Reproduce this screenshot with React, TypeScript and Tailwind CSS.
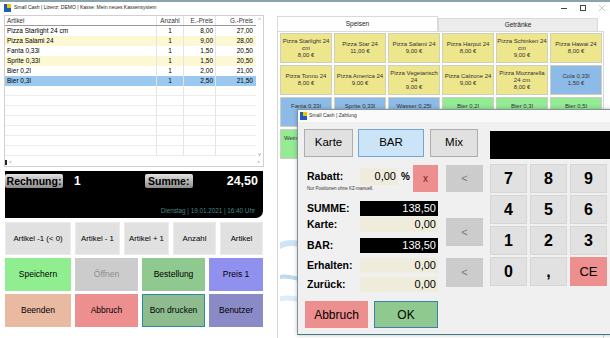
import React from "react"

const rows = [
  { name: "Pizza Starlight 24 cm", qty: "1", ep: "8,00", gp: "27,00", bg: "bg-white" },
  { name: "Pizza Salami 24", qty: "1", ep: "9,00", gp: "28,00", bg: "bg-[#fbf8d3]" },
  { name: "Fanta 0,33l", qty: "1", ep: "1,50", gp: "20,50", bg: "bg-white" },
  { name: "Sprite 0,33l", qty: "1", ep: "1,50", gp: "20,50", bg: "bg-[#fbf8d3]" },
  { name: "Bier 0,2l", qty: "1", ep: "2,00", gp: "21,00", bg: "bg-white" },
  { name: "Bier 0,3l", qty: "1", ep: "2,50", gp: "21,50", bg: "bg-[#9ac8ef]" },
]

const Y = "bg-[#eee68c]"
const B = "bg-[#8dbbe8]"
const G = "bg-[#93eb93]"

const products = [
  { lines: ["Pizza Starlight 24", "cm", "8,00 €"], c: Y },
  { lines: ["Pizza Star 24", "11,00 €"], c: Y },
  { lines: ["Pizza Salami 24", "9,00 €"], c: Y },
  { lines: ["Pizza Harput 24", "8,00 €"], c: Y },
  { lines: ["Pizza Schinken 24", "cm", "9,00 €"], c: Y },
  { lines: ["Pizza Hawai 24", "8,00 €"], c: Y },
  { lines: ["Pizza Tonno 24", "8,00 €"], c: Y },
  { lines: ["Pizza America 24", "9,00 €"], c: Y },
  { lines: ["Pizza Vegetarisch", "24", "9,00 €"], c: Y },
  { lines: ["Pizza Calzone 24", "9,00 €"], c: Y },
  { lines: ["Pizza Mozzarella", "24 cm", "8,00 €"], c: Y },
  { lines: ["Cola 0,33l", "1,50 €"], c: B },
  { lines: ["Fanta 0,33l"], c: B },
  { lines: ["Sprite 0,33l"], c: B },
  { lines: ["Wasser 0,25l"], c: B },
  { lines: ["Bier 0,2l"], c: G },
  { lines: ["Bier 0,3l"], c: G },
  { lines: ["Bier 0,5l"], c: G },
  { lines: ["Weinschorle 0,2l"], c: G },
]

function AppIcon() {
  return (
    <svg width="7" height="8" viewBox="0 0 7 8">
      <rect x="0" y="0" width="7" height="8" fill="#1d5fb8" />
      <rect x="3" y="0" width="4" height="4" fill="#f5c400" />
    </svg>
  )
}

function LabelBox({ children, w }: { children: React.ReactNode; w: string }) {
  return (
    <div
      className={`${w} h-[14px] rounded-[2px] bg-gradient-to-b from-[#e4e4e4] to-[#8c8c8c] flex items-center justify-center text-[10.5px] font-bold text-black`}
    >
      {children}
    </div>
  )
}

function Field({ value, dark }: { value: string; dark?: boolean }) {
  return (
    <div
      className={`w-[78px] h-[15px] flex items-center justify-end pr-[2px] text-[11px] leading-none ${
        dark ? "bg-black text-white" : "bg-[#efecdc] text-black"
      }`}
    >
      {value}
    </div>
  )
}

function FormRow({ label, value, dark, mt }: { label: string; value: string; dark?: boolean; mt: string }) {
  return (
    <div className={`flex items-center h-[15px] ${mt}`}>
      <div className="w-[56px] pl-[3px] text-[10.5px] leading-none font-bold text-black">{label}</div>
      <Field value={value} dark={dark} />
    </div>
  )
}

export default function App() {
  return (
    <div className="w-[610px] h-[338px] relative overflow-hidden bg-white font-['Liberation_Sans',Arial,sans-serif] text-[#222]">
      <div className="h-[2px] bg-[#8aa3ad]" />
      {/* title bar */}
      <div className="h-[12px] flex items-center pl-[4px] pr-[5px]">
        <AppIcon />
        <span className="ml-[3px] text-[5px] text-[#222]">Small Cash | Lizenz: DEMO | Kasse: Mein neues Kassensystem</span>
        <div className="ml-auto flex items-center gap-[13px]">
          <div className="w-[6px] h-[1px] bg-[#444]" />
          <div className="w-[6px] h-[6px] border border-[#444]" />
          <svg width="6" height="6" viewBox="0 0 6 6">
            <path d="M0 0L6 6M6 0L0 6" stroke="#bdbdbd" strokeWidth="0.8" />
          </svg>
        </div>
      </div>

      <div className="flex">
        {/* left panel */}
        <div className="w-[275px] shrink-0">
          <div className="ml-[4px] mt-[1px] w-[260px] h-[152px] border border-[#d0d0d0] flex flex-col">
            <div className="flex flex-1">
              <div className="w-[251px] overflow-hidden">
                <div className="grid grid-cols-[152px_27px_32px_40px] h-[10px] items-center text-[6.3px] text-[#333] border-b border-[#9a9a9a]">
                  <div className="pl-[2px] border-r border-[#e4e4e4] h-full flex items-center">Artikel</div>
                  <div className="text-center border-r border-[#e4e4e4] h-full flex items-center justify-center">Anzahl</div>
                  <div className="text-right pr-[2px] border-r border-[#e4e4e4] h-full flex items-center justify-end">E.-Preis</div>
                  <div className="text-right pr-[3px] h-full flex items-center justify-end">G.-Preis</div>
                </div>
                {rows.map((r) => (
                  <div
                    key={r.name + r.gp}
                    className={`grid grid-cols-[152px_27px_32px_40px] h-[10px] items-center text-[6.5px] text-black ${r.bg}`}
                  >
                    <div className="pl-[2px] border-r border-[#e4e4e4] h-full flex items-center">{r.name}</div>
                    <div className="border-r border-[#e4e4e4] h-full flex items-center justify-center">{r.qty}</div>
                    <div className="pr-[2px] border-r border-[#e4e4e4] h-full flex items-center justify-end">{r.ep}</div>
                    <div className="pr-[3px] h-full flex items-center justify-end">{r.gp}</div>
                  </div>
                ))}
                {Array.from({ length: 7 }).map((_, i) => (
                  <div key={i} className="grid grid-cols-[152px_27px_32px_40px] h-[10px] border-b border-[#ececec]">
                    <div className="border-r border-[#e4e4e4]" />
                    <div className="border-r border-[#e4e4e4]" />
                    <div className="border-r border-[#e4e4e4]" />
                    <div />
                  </div>
                ))}
              </div>
              <div className="flex-1 flex flex-col justify-between items-center text-[5px] text-[#888] py-[1px]">
                <span>^</span>
                <span>v</span>
              </div>
            </div>
            <div className="h-[7px] flex items-center justify-between pr-[3px] text-[5px] text-[#888]">
              <div className="flex items-center gap-[2px]">
                <div className="w-[2px] h-[5px] bg-[#222]" />
                <span>&lt;</span>
              </div>
              <span>&gt;</span>
            </div>
          </div>

          {/* totals panel */}
          <div className="ml-[5px] mt-[4px] w-[258px] h-[47px] bg-black rounded-br-[7px] pt-[1px] flex flex-col">
            <div className="flex items-center">
              <LabelBox w="w-[58px]">Rechnung:</LabelBox>
              <span className="ml-[11px] text-[12px] font-bold text-white">1</span>
              <div className="ml-[64px]">
                <LabelBox w="w-[48px]">Summe:</LabelBox>
              </div>
              <span className="ml-auto pr-[5px] text-[12.5px] font-bold text-white">24,50</span>
            </div>
            <div className="mt-auto mb-[3px] text-right pr-[8px] text-[6.3px] text-[#4b8687]">
              Dienstag | 19.01.2021 | 16:40 Uhr
            </div>
          </div>

          {/* buttons */}
          <div className="ml-[5px] mt-[4px] flex flex-col gap-[3px] text-[8.5px] text-black">
            <div className="flex gap-[4px] h-[33px]">
              {[
                ["Artikel -1 (< 0)", "w-[66px]"],
                ["Artikel - 1", "w-[45px]"],
                ["Artikel + 1", "w-[45px]"],
                ["Anzahl", "w-[43px]"],
                ["Artikel", "w-[43px]"],
              ].map(([t, w]) => (
                <div key={t} className={`${w} bg-[#e1e1e1] border border-[#ebebeb] flex items-center justify-center text-[7.8px]`}>
                  {t}
                </div>
              ))}
            </div>
            <div className="flex gap-[4px] h-[33px]">
              <div className="w-[66px] bg-[#90ee90] flex items-center justify-center">Speichern</div>
              <div className="w-[63px] bg-[#cccccc] flex items-center justify-center text-[#8c8c8c]">Öffnen</div>
              <div className="w-[63px] bg-[#8fc98f] flex items-center justify-center">Bestellung</div>
              <div className="w-[54px] bg-[#9090ee] flex items-center justify-center">Preis 1</div>
            </div>
            <div className="flex gap-[4px] h-[33px]">
              <div className="w-[66px] bg-[#e9b9a1] flex items-center justify-center">Beenden</div>
              <div className="w-[63px] bg-[#ee8f8f] flex items-center justify-center">Abbruch</div>
              <div className="w-[63px] bg-[#8fbc8f] border border-[#2b8a9e] flex items-center justify-center">Bon drucken</div>
              <div className="w-[54px] bg-[#8a8ac6] flex items-center justify-center">Benutzer</div>
            </div>
          </div>
        </div>

        {/* right panel */}
        <div className="flex-1 pl-[2px] pt-[2px]">
          <div className="flex h-[15px] text-[6.5px] text-[#222]">
            <div className="w-[161px] bg-white border border-b-0 border-[#d9d9d9] flex items-center justify-center">Speisen</div>
            <div className="w-[160px] mt-[2px] bg-[#ececec] border border-b-0 border-[#d9d9d9] flex items-center justify-center">
              Getränke
            </div>
          </div>
          <div className="w-[327px] h-[310px] border border-[#d9d9d9] bg-white pl-[2px] pt-[1px]">
            <div className="grid grid-cols-[52px_52px_52px_52px_52px_52px] auto-rows-[30px] gap-[2px]">
              {products.map((p, i) => (
                <div
                  key={i}
                  className={`${p.c} border border-[#cfcfbf] flex flex-col items-center ${
                    p.lines.length === 1 ? "justify-start pt-[5px]" : "justify-center"
                  } text-[6px] leading-[7px] text-[#333] text-center whitespace-nowrap`}
                >
                  {p.lines.map((l) => (
                    <span key={l}>{l}</span>
                  ))}
                </div>
              ))}
            </div>
            <svg width="320" height="170" viewBox="0 0 320 170" className="mt-[4px]">
              <path d="M-10 90 C 20 60, 40 110, 80 80" stroke="#cfe4f5" strokeWidth="6" fill="none" />
              <path d="M-10 120 C 10 100, 30 135, 70 110" stroke="#bcd9f0" strokeWidth="4" fill="none" />
              <path d="M-10 140 C 15 125, 30 150, 60 135" stroke="#dcecf8" strokeWidth="5" fill="none" />
            </svg>
          </div>
        </div>
      </div>

      {/* payment dialog */}
      <div className="absolute left-[297px] top-[109px] w-[330px] h-[226px] border border-[#8593a0] border-b-[#3e7a82] bg-[#f0f0f0] shadow-[0_0_4px_rgba(0,0,0,0.25)]">
        <div className="h-[12px] bg-[#fafafa] flex items-center pl-[2px]">
          <AppIcon />
          <span className="ml-[2px] text-[5px] text-[#333]">Small Cash | Zahlung</span>
        </div>
        <div className="pl-[6px] pt-[7px]">
          <div className="flex items-start h-[28px]">
            <div className="w-[49px] h-[28px] bg-[#e1e1e1] border border-[#adadad] flex items-center justify-center text-[11.5px] text-black">
              Karte
            </div>
            <div className="ml-[5px] w-[66px] h-[28px] bg-[#cce4f7] border border-[#6fa6dc] flex items-center justify-center text-[11.5px] text-black">
              BAR
            </div>
            <div className="ml-[6px] w-[48px] h-[28px] bg-[#e1e1e1] border border-[#adadad] flex items-center justify-center text-[11.5px] text-black">
              Mix
            </div>
            <div className="ml-[12px] mt-[2px] w-[130px] h-[28px] bg-black shrink-0" />
          </div>

          <div className="flex mt-[7px]">
            {/* form */}
            <div className="w-[135px] flex flex-col">
              <div className="flex h-[29px]">
                <div className="w-[109px] pt-[4px]">
                  <div className="flex items-center h-[17px]">
                    <div className="w-[56px] pl-[3px] text-[10.5px] leading-none font-bold text-black">Rabatt:</div>
                    <div className="w-[38px] h-[17px] bg-[#efecdc] flex items-center justify-end pr-[2px] text-[11px] leading-none text-black">
                      0,00
                    </div>
                    <span className="ml-[3px] text-[10px] leading-none font-bold text-black">%</span>
                  </div>
                  <div className="pl-[3px] mt-[1px] text-[4.5px] leading-[5px] text-[#333]">Nur Positionen ohne KZ-manuell.</div>
                </div>
                <div className="mt-[1px] w-[25px] h-[27px] bg-[#ee8f8f] flex items-center justify-center text-[10px] text-[#7a1c1c]">
                  x
                </div>
              </div>
              <FormRow label="SUMME:" value="138,50" dark mt="mt-[8px]" />
              <FormRow label="Karte:" value="0,00" mt="mt-[1px]" />
              <FormRow label="BAR:" value="138,50" dark mt="mt-[6px]" />
              <FormRow label="Erhalten:" value="0,00" mt="mt-[5px]" />
              <FormRow label="Zurück:" value="0,00" mt="mt-[4px]" />
              <div className="flex mt-[9px] ml-[1px]">
                <div className="w-[63px] h-[27px] bg-[#ee8f8f] flex items-center justify-center text-[12px] text-black">
                  Abbruch
                </div>
                <div className="ml-[6px] w-[64px] h-[27px] bg-[#8fc98f] border border-[#3a7fae] flex items-center justify-center text-[12px] text-black">
                  OK
                </div>
              </div>
            </div>

            {/* arrow buttons */}
            <div className="ml-[7px] w-[37px] flex flex-col">
              <div className="mt-[1px] h-[27px] bg-[#cccccc] flex items-center justify-center text-[11px] text-[#777]">&lt;</div>
              <div className="mt-[26px] h-[28px] bg-[#cccccc] flex items-center justify-center text-[11px] text-[#777]">&lt;</div>
              <div className="mt-[12px] h-[29px] bg-[#cccccc] flex items-center justify-center text-[11px] text-[#777]">&lt;</div>
            </div>

            {/* keypad */}
            <div className="ml-[7px] grid grid-cols-[37px_37px_37px] auto-rows-[29px] gap-x-[3px] gap-y-[2px]">
              {["7", "8", "9", "4", "5", "6", "1", "2", "3", "0", ","].map((k) => (
                <div
                  key={k}
                  className="bg-[#e1e1e1] border border-[#d6d6d6] flex items-center justify-center text-[16px] font-bold text-black"
                >
                  {k}
                </div>
              ))}
              <div className="bg-[#ee8f8f] flex items-center justify-center text-[13px] text-black">CE</div>
            </div>
          </div>
        </div>
      </div>
    </div>
  )
}
